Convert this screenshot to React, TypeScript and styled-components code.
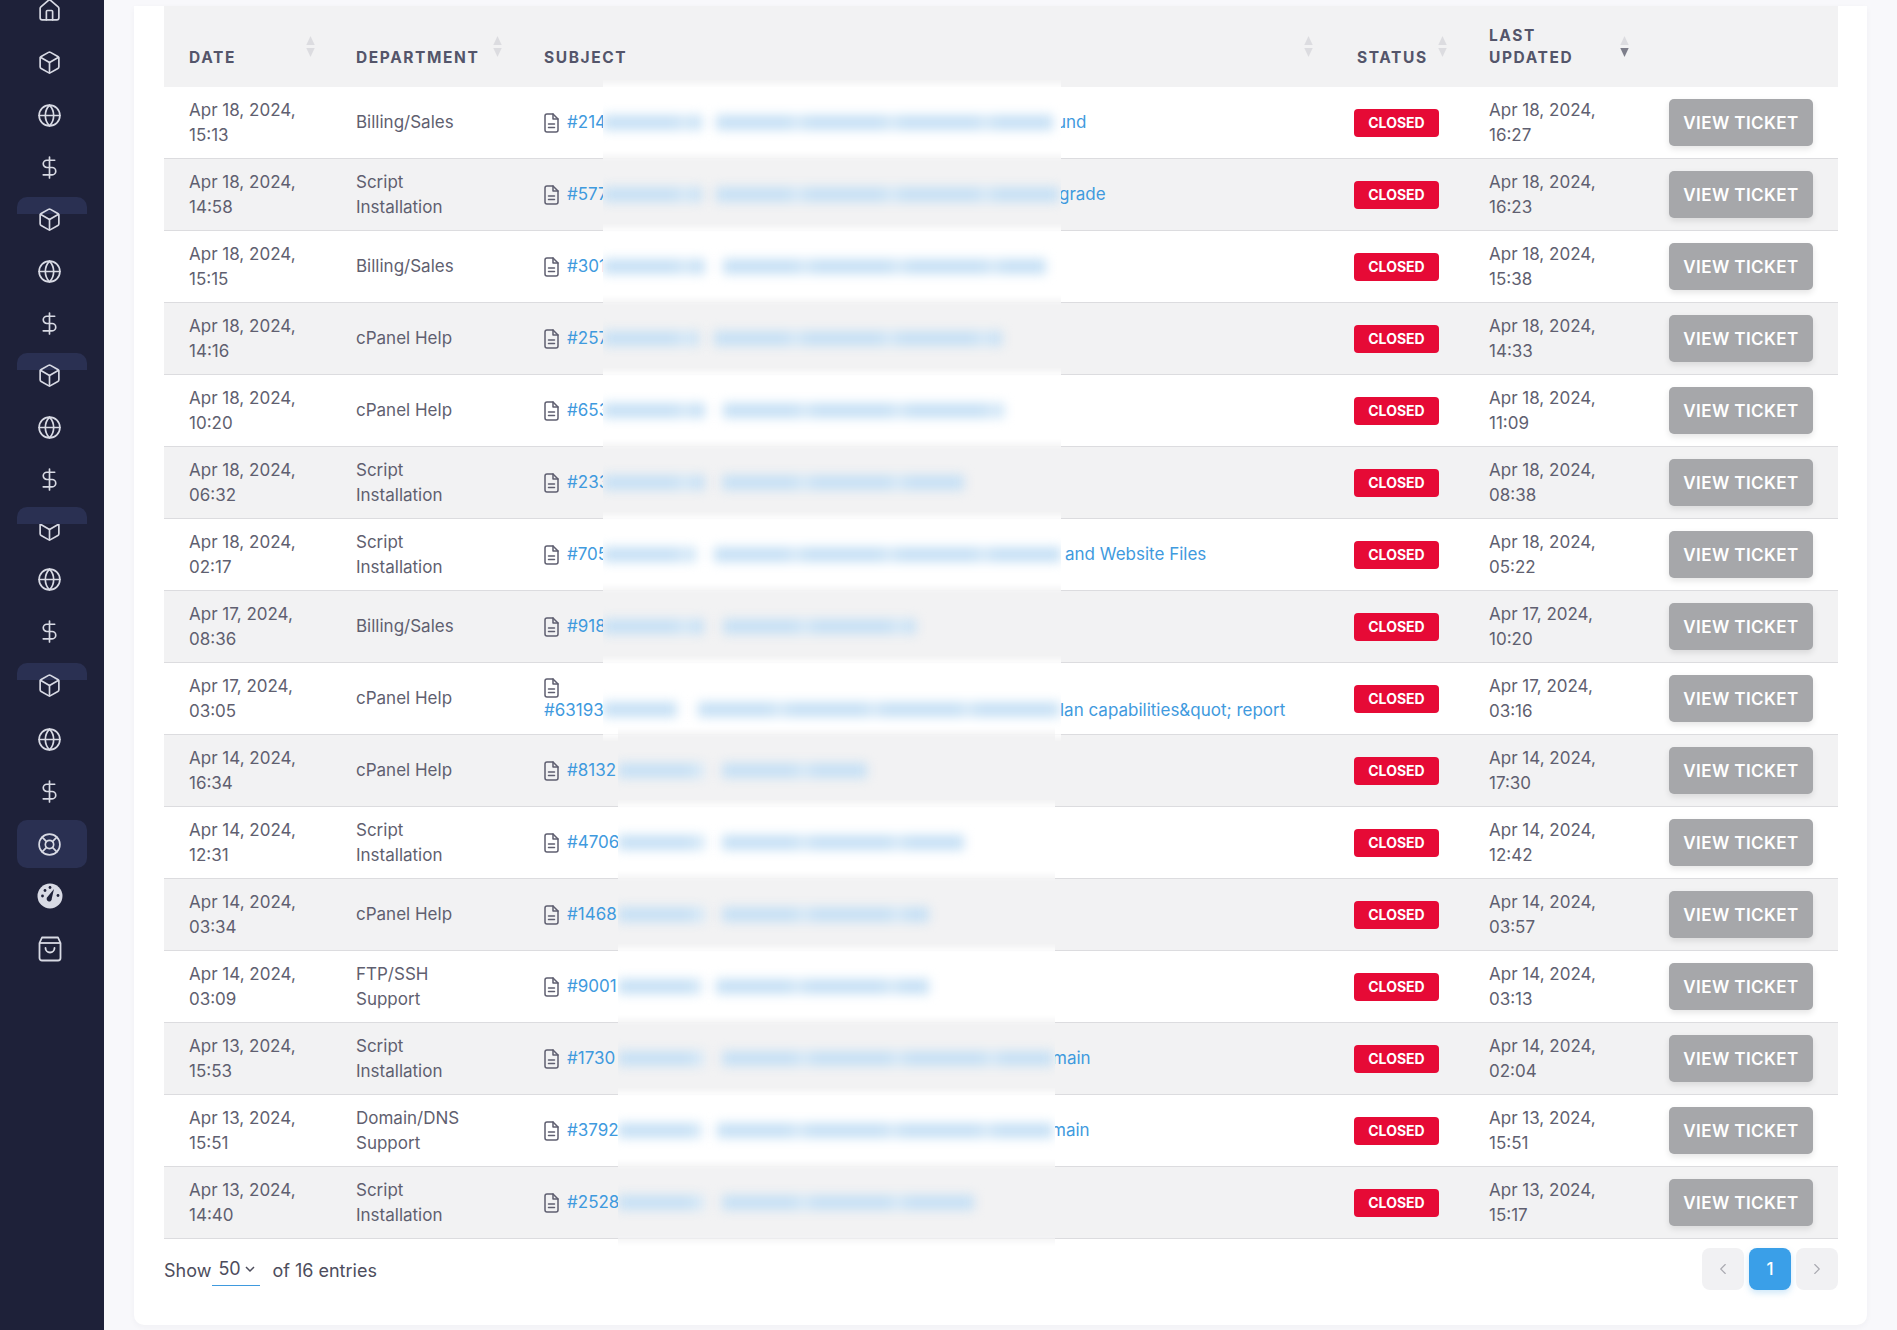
import styled, { createGlobalStyle } from 'styled-components';
import { Box, ChevronLeft, ChevronRight, DollarSign, Globe, Home, LifeBuoy } from 'lucide-react';

import type React from 'react';

const GlobalStyle = createGlobalStyle`
  html, body {
    margin: 0;
    height: 1330px;
    overflow: hidden;
    background: #f8f8fb;
    font-family: Inter, 'Liberation Sans', sans-serif;
  }
`;

const Page = styled.div`
  display: flex;
  height: 1330px;
`;

const Sidebar = styled.nav`
  background: #1e2139;
  color: #d8dae4;
  flex: 0 0 104px;
  height: 1330px;
  overflow: hidden;
`;

const NavList = styled.div`
  display: flex;
  flex-direction: column;
  margin-top: -16px;
`;

const NavItem = styled.div<{ $shift?: number; $active?: boolean }>`
  align-items: center;
  background: ${(p) => (p.$active ? '#2a3052' : 'transparent')};
  border-radius: 10px;
  display: flex;
  height: ${(p) => (p.$active ? 48 : 52)}px;
  justify-content: center;
  margin: ${(p) => p.$shift ?? 0}px 17px 0;
  position: relative;
  width: 70px;
`;

const NavStub = styled.span<{ $over?: boolean }>`
  background: #2a3052;
  border-radius: 10px 10px 0 0;
  height: 17px;
  left: 0;
  position: absolute;
  right: 0;
  top: 4px;
  z-index: ${(p) => (p.$over ? 2 : 0)};
`;

const NavIcon = styled.span`
  display: flex;
  margin-left: -5px;
  position: relative;
  z-index: 1;
`;

const Main = styled.main`
  flex: 1;
  min-width: 0;
  padding: 6px 30px 5px;
`;

const Card = styled.section`
  background: #fff;
  border-radius: 0 0 10px 10px;
  box-shadow: 0 2px 6px rgba(40, 40, 80, 0.04);
  height: 1319px;
  box-sizing: border-box;
  padding: 0 29px 0 30px;
`;

const Table = styled.table`
  border-collapse: separate;
  border-spacing: 0;
  table-layout: fixed;
  width: 1674px;
`;

const HeadCell = styled.th`
  background: #f2f2f3;
  box-sizing: border-box;
  color: #54556a;
  font-size: 15.5px;
  font-weight: 700;
  height: 81px;
  letter-spacing: 1.6px;
  line-height: 22px;
  padding: 0 25px 18px;
  position: relative;
  text-align: left;
  text-transform: uppercase;
  vertical-align: bottom;
`;

const SortMark = styled.svg<{ $right: number }>`
  height: 21px;
  position: absolute;
  right: ${(p) => p.$right}px;
  top: 30px;
  width: 11px;
`;

const Row = styled.tr<{ $shaded: boolean }>`
  background: ${(p) => (p.$shaded ? '#f2f2f3' : '#fff')};
`;

const Cell = styled.td`
  border-bottom: 1px solid #dcdcdf;
  box-sizing: border-box;
  color: #5f5f70;
  font-size: 17px;
  height: 72px;
  line-height: 25px;
  padding: 0 25px;
  vertical-align: middle;
`;

const SubjectCell = styled(Cell)`
  position: relative;
`;

const SubjectLink = styled.a`
  align-items: center;
  color: #3f9ade;
  display: flex;
  text-decoration: none;
  white-space: nowrap;
`;

const StackedLink = styled(SubjectLink)`
  align-items: flex-start;
  flex-direction: column;
  margin-top: 3px;
`;

const DocIcon = styled.svg`
  color: #5f5f70;
  flex: none;
  margin-right: 8px;
`;

const Head = styled.span<{ $width?: number }>`
  display: inline-block;
  width: ${(p) => (p.$width ? `${p.$width}px` : 'auto')};
`;

const Redaction = styled.div<{ $left: number; $width: number; $shaded: boolean; $low?: boolean }>`
  background: ${(p) => (p.$shaded ? '#f2f2f3' : '#fff')};
  align-items: center;
  bottom: -8px;
  display: flex;
  left: ${(p) => p.$left}px;
  mask-image: linear-gradient(transparent, #000 10px, #000 calc(100% - 10px), transparent);
  overflow: hidden;
  padding-top: ${(p) => (p.$low ? 22 : 0)}px;
  position: absolute;
  top: -8px;
  box-sizing: border-box;
  width: ${(p) => p.$width}px;
  z-index: 1;
`;

const BlurBar = styled.span<{ $left: number; $width: number }>`
  background: repeating-linear-gradient(90deg, #c6e0f5 0 70px, #d8eaf8 82px, #c6e0f5 94px);
  filter: blur(5.5px);
  flex: none;
  height: 15px;
  margin-left: ${(p) => p.$left}px;
  width: ${(p) => p.$width}px;
`;

const StatusBadge = styled.span`
  background: #e60a36;
  border-radius: 4px;
  color: #fff;
  display: block;
  font-size: 14px;
  font-weight: 700;
  height: 28px;
  line-height: 28px;
  margin-left: -3px;
  text-align: center;
  width: 85px;
`;

const ActionCell = styled(Cell)`
  padding: 0 25px 0 0;
  text-align: right;
`;

const ViewButton = styled.button`
  background: #a6a7aa;
  border: 0;
  border-radius: 5px;
  box-shadow: 0 3px 6px rgba(0, 0, 0, 0.1);
  color: #fff;
  font-family: inherit;
  font-size: 17px;
  font-weight: 600;
  height: 47px;
  letter-spacing: 0.4px;
  padding: 0;
  width: 144px;
`;

const Footer = styled.div`
  align-items: flex-start;
  display: flex;
  justify-content: space-between;
  padding-top: 9px;
`;

const EntryInfo = styled.div`
  align-items: center;
  color: #4d4d5c;
  display: flex;
  font-size: 18px;
  height: 44px;
`;

const SizeSelect = styled.span`
  align-items: center;
  align-self: flex-start;
  border-bottom: 1px solid #3f9ade;
  box-sizing: content-box;
  display: flex;
  gap: 3px;
  height: 33px;
  margin: 0 12px 0 1px;
  padding: 4px 4px 0 6px;
  width: 38px;
`;

const Pager = styled.div`
  display: flex;
  gap: 5px;
`;

const PageButton = styled.span<{ $current?: boolean }>`
  align-items: center;
  background: ${(p) => (p.$current ? '#3a9fe8' : '#f1f1f3')};
  border-radius: 8px;
  box-shadow: ${(p) => (p.$current ? '0 3px 6px rgba(58, 159, 232, 0.25)' : 'none')};
  color: ${(p) => (p.$current ? '#fff' : '#a9a9b0')};
  display: flex;
  font-size: 17px;
  font-weight: 500;
  height: 42px;
  justify-content: center;
  width: 42px;
`;

function Gauge() {
  return (
    <svg width="26" height="26" viewBox="0 0 26 26">
      <circle cx="13" cy="13" r="12.5" fill="#d8dae4" />
      <path d="M17 6 L14.8 15.5 A2.6 2.6 0 1 1 10.6 13.8 Z" fill="#1e2139" />
      <circle cx="5.5" cy="13" r="1.4" fill="#1e2139" />
      <circle cx="8" cy="7.5" r="1.4" fill="#1e2139" />
      <circle cx="13" cy="4.5" r="1.4" fill="#1e2139" />
      <circle cx="21" cy="12.5" r="1.4" fill="#1e2139" />
    </svg>
  );
}

function Bag() {
  return (
    <svg width="24" height="26" viewBox="0 0 24 26" fill="none" stroke="currentColor" strokeWidth="1.8">
      <path d="M4 1.5 H20 L22.5 7 V22 A2.5 2.5 0 0 1 20 24.5 H4 A2.5 2.5 0 0 1 1.5 22 V7 Z" strokeLinejoin="round" />
      <path d="M1.5 7 H22.5" />
      <path d="M7.5 12 A4.5 4.5 0 0 0 16.5 12" strokeLinecap="round" />
    </svg>
  );
}

function FileMark() {
  return (
    <DocIcon width="15" height="20" viewBox="0 0 15 20" fill="none" stroke="currentColor" strokeWidth="1.5" strokeLinecap="round" strokeLinejoin="round">
      <path d="M9 1 H3 A2 2 0 0 0 1 3 V17 A2 2 0 0 0 3 19 H12 A2 2 0 0 0 14 17 V6 Z" />
      <path d="M9 1 V6 H14" />
      <path d="M4.5 11 H10.5" />
      <path d="M4.5 14.5 H10.5" />
    </DocIcon>
  );
}

function SortArrows({ active, right }: { active?: boolean; right: number }) {
  return (
    <SortMark $right={right} viewBox="0 0 10 20">
      <path d="M5 0 L9 8.5 H1 Z" fill="#dcdce0" />
      <path d="M5 20 L9 11.5 H1 Z" fill={active ? '#7d7e8a' : '#dcdce0'} />
    </SortMark>
  );
}

const iconProps = { size: 25, strokeWidth: 1.6 };
const cube = <Box {...iconProps} />;
const globe = <Globe {...iconProps} />;
const dollar = <DollarSign {...iconProps} />;

type NavEntry = { icon: React.ReactNode; shift?: number; stub?: 'under' | 'over'; active?: boolean };

const navEntries: NavEntry[] = [
  { icon: <Home {...iconProps} /> },
  { icon: cube },
  { icon: globe, shift: 1 },
  { icon: dollar },
  { icon: cube, stub: 'under' },
  { icon: globe },
  { icon: dollar },
  { icon: cube, stub: 'under' },
  { icon: globe },
  { icon: dollar },
  { icon: cube, shift: -2, stub: 'over' },
  { icon: globe, shift: -2 },
  { icon: dollar },
  { icon: cube, shift: 2, stub: 'under' },
  { icon: globe, shift: 2 },
  { icon: dollar },
  { icon: <LifeBuoy {...iconProps} />, shift: 3, active: true },
  { icon: <Gauge />, shift: 2 },
  { icon: <Bag />, shift: 1 },
];

type Ticket = {
  date: [string, string];
  department: [string, string?];
  head: string;
  tail?: string;
  slot?: number;
  stacked?: boolean;
  // x positions of the blurred part, on the page
  blur: [number, number, number, number, number];
  updated: [string, string];
};

const tickets: Ticket[] = [
  { date: ['Apr 18, 2024,', '15:13'], department: ['Billing/Sales'], head: '#214', tail: 'und', slot: 489, blur: [603, 702, 716, 1053, 1061], updated: ['Apr 18, 2024,', '16:27'] },
  { date: ['Apr 18, 2024,', '14:58'], department: ['Script', 'Installation'], head: '#577', tail: 'grade', slot: 492, blur: [603, 702, 716, 1059, 1061], updated: ['Apr 18, 2024,', '16:23'] },
  { date: ['Apr 18, 2024,', '15:15'], department: ['Billing/Sales'], head: '#301', blur: [603, 705, 723, 1046, 1061], updated: ['Apr 18, 2024,', '15:38'] },
  { date: ['Apr 18, 2024,', '14:16'], department: ['cPanel Help'], head: '#257', blur: [603, 699, 714, 1002, 1061], updated: ['Apr 18, 2024,', '14:33'] },
  { date: ['Apr 18, 2024,', '10:20'], department: ['cPanel Help'], head: '#653', blur: [603, 705, 723, 1004, 1061], updated: ['Apr 18, 2024,', '11:09'] },
  { date: ['Apr 18, 2024,', '06:32'], department: ['Script', 'Installation'], head: '#233', blur: [603, 705, 722, 964, 1061], updated: ['Apr 18, 2024,', '08:38'] },
  { date: ['Apr 18, 2024,', '02:17'], department: ['Script', 'Installation'], head: '#705', tail: 'and Website Files', slot: 498, blur: [603, 696, 714, 1061, 1061], updated: ['Apr 18, 2024,', '05:22'] },
  { date: ['Apr 17, 2024,', '08:36'], department: ['Billing/Sales'], head: '#918', blur: [603, 704, 723, 916, 1061], updated: ['Apr 17, 2024,', '10:20'] },
  { date: ['Apr 17, 2024,', '03:05'], department: ['cPanel Help'], head: '#63193', tail: 'lan capabilities&quot; report', slot: 516, stacked: true, blur: [603, 677, 698, 1061, 1061], updated: ['Apr 17, 2024,', '03:16'] },
  { date: ['Apr 14, 2024,', '16:34'], department: ['cPanel Help'], head: '#8132', blur: [618, 704, 722, 867, 1055], updated: ['Apr 14, 2024,', '17:30'] },
  { date: ['Apr 14, 2024,', '12:31'], department: ['Script', 'Installation'], head: '#4706', blur: [618, 705, 722, 964, 1055], updated: ['Apr 14, 2024,', '12:42'] },
  { date: ['Apr 14, 2024,', '03:34'], department: ['cPanel Help'], head: '#1468', blur: [618, 705, 722, 929, 1055], updated: ['Apr 14, 2024,', '03:57'] },
  { date: ['Apr 14, 2024,', '03:09'], department: ['FTP/SSH', 'Support'], head: '#9001', blur: [618, 702, 716, 929, 1055], updated: ['Apr 14, 2024,', '03:13'] },
  { date: ['Apr 13, 2024,', '15:53'], department: ['Script', 'Installation'], head: '#1730', tail: 'main', slot: 485, blur: [618, 704, 722, 1053, 1055], updated: ['Apr 14, 2024,', '02:04'] },
  { date: ['Apr 13, 2024,', '15:51'], department: ['Domain/DNS', 'Support'], head: '#3792', tail: 'main', slot: 484, blur: [618, 702, 717, 1053, 1055], updated: ['Apr 13, 2024,', '15:51'] },
  { date: ['Apr 13, 2024,', '14:40'], department: ['Script', 'Installation'], head: '#2528', blur: [618, 704, 722, 974, 1055], updated: ['Apr 13, 2024,', '15:17'] },
];

const columns = [
  { label: 'Date', width: 167, sortRight: 15 },
  { label: 'Department', width: 188, sortRight: 16 },
  { label: 'Subject', width: 813, sortRight: 18 },
  { label: 'Status', width: 132, sortRight: 16 },
  { label: 'Last Updated', width: 180, sortRight: 14, active: true },
  { label: '', width: 194 },
];

const SUBJECT_CELL_LEFT = 519;

function Lines({ lines }: { lines: (string | undefined)[] }) {
  return (
    <>
      {lines.filter(Boolean).map((line) => (
        <div key={line}>{line}</div>
      ))}
    </>
  );
}

function Subject({ ticket, shaded }: { ticket: Ticket; shaded: boolean }) {
  const [start, idEnd, phraseStart, phraseEnd, end] = ticket.blur;
  const text = (
    <span>
      <Head $width={ticket.slot}>{ticket.head}</Head>
      {ticket.tail}
    </span>
  );

  return (
    <SubjectCell>
      {ticket.stacked ? (
        <StackedLink href="#ticket">
          <FileMark />
          {text}
        </StackedLink>
      ) : (
        <SubjectLink href="#ticket">
          <FileMark />
          {text}
        </SubjectLink>
      )}
      <Redaction
        $left={start - SUBJECT_CELL_LEFT}
        $width={end - start}
        $shaded={shaded}
        $low={ticket.stacked}
      >
        <BlurBar $left={0} $width={idEnd - start} />
        <BlurBar $left={phraseStart - idEnd} $width={phraseEnd - phraseStart} />
      </Redaction>
    </SubjectCell>
  );
}

function App() {
  return (
    <Page>
      <GlobalStyle />
      <Sidebar>
        <NavList>
          {navEntries.map((entry, index) => (
            // eslint-disable-next-line react/no-array-index-key
            <NavItem key={index} $shift={entry.shift} $active={entry.active}>
              {entry.stub && <NavStub $over={entry.stub === 'over'} />}
              <NavIcon>{entry.icon}</NavIcon>
            </NavItem>
          ))}
        </NavList>
      </Sidebar>
      <Main>
        <Card>
          <Table>
            <colgroup>
              {columns.map((column) => (
                <col key={column.label} width={column.width} />
              ))}
            </colgroup>
            <thead>
              <tr>
                {columns.map((column) => (
                  <HeadCell key={column.label}>
                    {column.label}
                    {column.sortRight && <SortArrows active={column.active} right={column.sortRight} />}
                  </HeadCell>
                ))}
              </tr>
            </thead>
            <tbody>
              {tickets.map((ticket, index) => {
                const shaded = index % 2 === 1;
                return (
                  <Row key={ticket.head} $shaded={shaded}>
                    <Cell><Lines lines={ticket.date} /></Cell>
                    <Cell><Lines lines={ticket.department} /></Cell>
                    <Subject ticket={ticket} shaded={shaded} />
                    <Cell><StatusBadge>CLOSED</StatusBadge></Cell>
                    <Cell><Lines lines={ticket.updated} /></Cell>
                    <ActionCell><ViewButton>VIEW TICKET</ViewButton></ActionCell>
                  </Row>
                );
              })}
            </tbody>
          </Table>
          <Footer>
            <EntryInfo>
              Show
              <SizeSelect>
                50
                <svg width="12" height="12" viewBox="0 0 12 12" fill="none" stroke="currentColor" strokeWidth="1.5">
                  <path d="M2 4 L6 8 L10 4" />
                </svg>
              </SizeSelect>
              of 16 entries
            </EntryInfo>
            <Pager>
              <PageButton><ChevronLeft size={18} strokeWidth={1.5} /></PageButton>
              <PageButton $current>1</PageButton>
              <PageButton><ChevronRight size={18} strokeWidth={1.5} /></PageButton>
            </Pager>
          </Footer>
        </Card>
      </Main>
    </Page>
  );
}

export default App;
